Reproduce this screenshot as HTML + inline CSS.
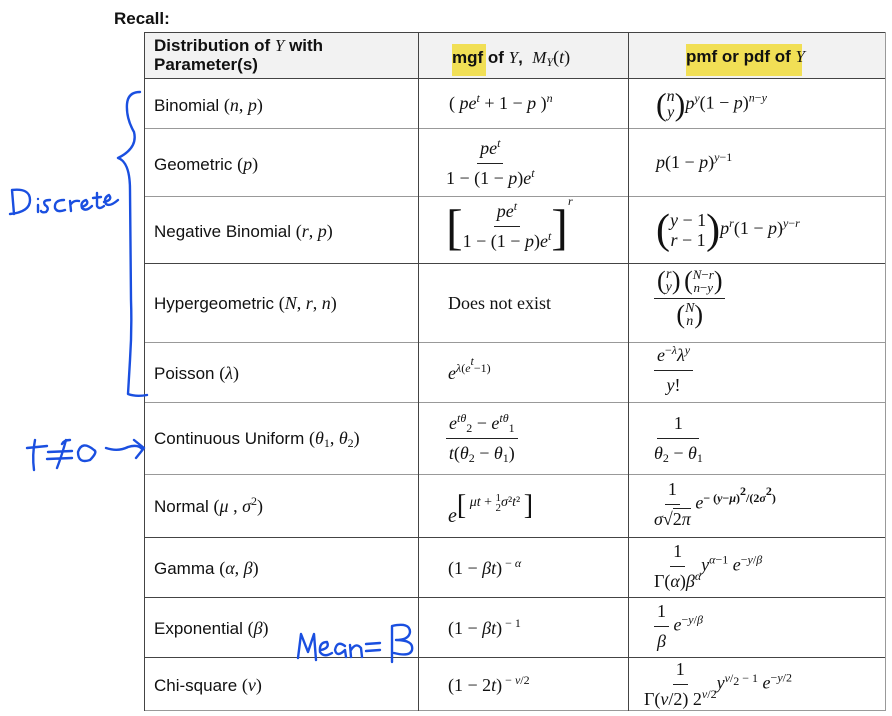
<!DOCTYPE html>
<html><head><meta charset="utf-8"><style>
body{margin:0;width:892px;height:716px;background:#fff;position:relative;overflow:hidden;font-family:"Liberation Sans",sans-serif;color:#111}
.a{position:absolute;white-space:nowrap}
.l{font-size:17px}
.m{font-family:"Liberation Serif","DejaVu Serif",serif;font-size:18px}
i{font-family:"Liberation Serif",serif;font-style:italic}
sup{font-size:12px;vertical-align:7px;line-height:0}
sub{font-size:12px;vertical-align:-3px;line-height:0}
.hl{position:absolute;background:#f1df55}
.hr{position:absolute;left:144px;width:742px;height:0;border-top:1.5px solid #444}
.vr{position:absolute;top:32px;height:679px;width:0;border-left:1.5px solid #444}
.fr{display:inline-flex;flex-direction:column;align-items:center;vertical-align:middle}
.fr>span:first-child{border-bottom:1.3px solid #222;padding:0 3px 4px}
.fr>span:last-child{padding-top:4px}
</style></head><body>
<div class="a" style="left:114px;top:9px;font-size:17px;font-weight:bold">Recall:</div>
<div style="position:absolute;left:144px;top:32px;width:742px;height:46px;background:#f2f2f2"></div>
<div class="hl" style="left:452px;top:44px;width:34px;height:32px"></div>
<div class="hl" style="left:686px;top:44px;width:116px;height:32px"></div>
<div class="hr" style="top:32px"></div>
<div class="hr" style="top:78px"></div>
<div class="hr" style="top:128px;border-color:#999"></div>
<div class="hr" style="top:196px;border-color:#999"></div>
<div class="hr" style="top:263px"></div>
<div class="hr" style="top:342px;border-color:#999"></div>
<div class="hr" style="top:402px;border-color:#999"></div>
<div class="hr" style="top:474px;border-color:#999"></div>
<div class="hr" style="top:537px"></div>
<div class="hr" style="top:597px"></div>
<div class="hr" style="top:657px"></div>
<div class="hr" style="top:710px;border-color:#999"></div>
<div class="vr" style="left:144px"></div>
<div class="vr" style="left:418px"></div>
<div class="vr" style="left:628px"></div>
<div class="vr" style="left:885px;border-color:#999"></div>

<div class="a l" style="left:154px;top:36px;font-weight:bold;line-height:19px">Distribution of <i style="font-weight:normal">Y</i> with<br>Parameter(s)</div>
<div class="a l" style="left:452px;top:47px;font-weight:bold">mgf of <i style="font-weight:normal">Y</i>,&nbsp; <i style="font-weight:normal">M<sub>Y</sub></i><span class="m" style="font-weight:normal">(<i>t</i>)</span></div>
<div class="a l" style="left:686px;top:47px;font-weight:bold">pmf or pdf of <i style="font-weight:normal">Y</i></div>

<div class="a l" style="left:154px;top:95px">Binomial <span class="m">(<i>n</i>, <i>p</i>)</span></div>
<div class="a l" style="left:154px;top:154px">Geometric <span class="m">(<i>p</i>)</span></div>
<div class="a l" style="left:154px;top:221px">Negative Binomial <span class="m">(<i>r</i>, <i>p</i>)</span></div>
<div class="a l" style="left:154px;top:293px">Hypergeometric <span class="m">(<i>N</i>, <i>r</i>, <i>n</i>)</span></div>
<div class="a l" style="left:154px;top:363px">Poisson <span class="m">(<i>λ</i>)</span></div>
<div class="a l" style="left:154px;top:428px">Continuous Uniform <span class="m">(<i>θ</i><sub>1</sub>, <i>θ</i><sub>2</sub>)</span></div>
<div class="a l" style="left:154px;top:496px">Normal <span class="m">(<i>μ</i> , <i>σ</i><sup>2</sup>)</span></div>
<div class="a l" style="left:154px;top:558px">Gamma <span class="m">(<i>α</i>, <i>β</i>)</span></div>
<div class="a l" style="left:154px;top:618px">Exponential <span class="m">(<i>β</i>)</span></div>
<div class="a l" style="left:154px;top:675px">Chi-square <span class="m">(<i>v</i>)</span></div>

<!-- mgf -->
<div class="a m" style="left:449px;top:93px">( <i>pe<sup>t</sup></i> + 1 − <i>p</i> )<sup><i>n</i></sup></div>
<div class="a m" style="left:446px;top:138px"><span class="fr"><span><i>pe<sup>t</sup></i></span><span>1 − (1 − <i>p</i>)<i>e<sup>t</sup></i></span></span></div>
<div class="a m" style="left:446px;top:201px"><span style="font-size:50px;vertical-align:middle;line-height:50px">[</span><span class="fr"><span><i>pe<sup>t</sup></i></span><span>1 − (1 − <i>p</i>)<i>e<sup>t</sup></i></span></span><span style="font-size:50px;vertical-align:middle;line-height:50px">]</span><sup style="vertical-align:26px"><i>r</i></sup></div>
<div class="a m" style="left:448px;top:293px">Does not exist</div>
<div class="a m" style="left:448px;top:361px"><i>e</i><sup><i>λ</i>(<i>e<sup>t</sup></i>−1)</sup></div>
<div class="a m" style="left:446px;top:413px"><span class="fr"><span><i>e<sup>tθ</sup></i><sub>2</sub> − <i>e<sup>tθ</sup></i><sub>1</sub></span><span><i>t</i>(<i>θ</i><sub>2</sub> − <i>θ</i><sub>1</sub>)</span></span></div>
<div class="a m" style="left:448px;top:490px"><i style="font-size:20px;vertical-align:-6px">e</i><span style="font-size:28px;vertical-align:2px;font-weight:100">[</span><span style="font-size:14px;vertical-align:10px"> <i>μt</i> + <span style="display:inline-block;vertical-align:middle;line-height:10px;font-size:11px;text-align:center">1<br>2</span><i>σ</i>²<i>t</i>² </span><span style="font-size:28px;vertical-align:2px">]</span></div>
<div class="a m" style="left:448px;top:558px">(1 − <i>βt</i>)<sup> − <i>α</i></sup></div>
<div class="a m" style="left:448px;top:618px">(1 − <i>βt</i>)<sup> − 1</sup></div>
<div class="a m" style="left:448px;top:675px">(1 − 2<i>t</i>)<sup> − <i>v</i>/2</sup></div>

<!-- pdf -->
<div class="a m" style="left:656px;top:86px"><span style="font-size:32px;vertical-align:middle">(</span><span style="display:inline-block;vertical-align:middle;line-height:16px;font-size:16px;text-align:center"><i>n</i><br><i>y</i></span><span style="font-size:32px;vertical-align:middle">)</span><i>p<sup>y</sup></i>(1 − <i>p</i>)<sup><i>n</i>−<i>y</i></sup></div>
<div class="a m" style="left:656px;top:152px"><i>p</i>(1 − <i>p</i>)<sup><i>y</i>−1</sup></div>
<div class="a m" style="left:656px;top:206px"><span style="font-size:42px;vertical-align:middle">(</span><span style="display:inline-block;vertical-align:middle;line-height:20px;text-align:center"><i>y</i> − 1<br><i>r</i> − 1</span><span style="font-size:42px;vertical-align:middle">)</span><i>p<sup>r</sup></i>(1 − <i>p</i>)<sup><i>y</i>−<i>r</i></sup></div>
<div class="a m" style="left:654px;top:266px;font-size:14px"><span class="fr"><span style="padding-bottom:2px"><span style="font-size:26px;vertical-align:middle">(</span><span style="display:inline-block;vertical-align:middle;line-height:13px;text-align:center"><i>r</i><br><i>y</i></span><span style="font-size:26px;vertical-align:middle">)</span> <span style="font-size:26px;vertical-align:middle">(</span><span style="display:inline-block;vertical-align:middle;line-height:13px;text-align:center;font-size:13px"><i>N</i>−<i>r</i><br><i>n</i>−<i>y</i></span><span style="font-size:26px;vertical-align:middle">)</span></span><span style="padding-top:1px"><span style="font-size:26px;vertical-align:middle">(</span><span style="display:inline-block;vertical-align:middle;line-height:13px;text-align:center"><i>N</i><br><i>n</i></span><span style="font-size:26px;vertical-align:middle">)</span></span></span></div>
<div class="a m" style="left:654px;top:345px"><span class="fr"><span><i>e</i><sup>−<i>λ</i></sup><i>λ<sup>y</sup></i></span><span><i>y</i>!</span></span></div>
<div class="a m" style="left:654px;top:413px"><span class="fr"><span>&nbsp;&nbsp;&nbsp;1&nbsp;&nbsp;&nbsp;</span><span><i>θ</i><sub>2</sub> − <i>θ</i><sub>1</sub></span></span></div>
<div class="a m" style="left:654px;top:479px"><span class="fr"><span>1</span><span><i>σ</i>√<span style="border-top:1px solid #222">2<i>π</i></span></span></span> <i>e</i><sup style="font-weight:bold">− (<i>y</i>−<i>μ</i>)<sup>2</sup>/(2<i>σ</i><sup>2</sup>)</sup></div>
<div class="a m" style="left:654px;top:541px"><span class="fr"><span>1</span><span>Γ(<i>α</i>)<i>β<sup>α</sup></i></span></span><i>y</i><sup><i>α</i>−1</sup> <i>e</i><sup>−<i>y</i>/<i>β</i></sup></div>
<div class="a m" style="left:654px;top:601px"><span class="fr"><span>1</span><span><i>β</i></span></span> <i>e</i><sup>−<i>y</i>/<i>β</i></sup></div>
<div class="a m" style="left:644px;top:659px"><span class="fr"><span>1</span><span>Γ(<i>v</i>/2) 2<sup><i>v</i>/2</sup></span></span><i>y</i><sup><i>v</i>/<sub>2</sub> − 1</sup> <i>e</i><sup>−<i>y</i>/2</sup></div>

<svg style="position:absolute;left:0;top:0" width="892" height="716" fill="none" stroke="#1a4fe0" stroke-width="2.4" stroke-linecap="round" stroke-linejoin="round">
<path d="M140 92 Q128 92 127 104 Q126 118 134 132 Q138 148 118 158 Q130 162 130 190 L131 300 Q132 330 130 360 L128 394 Q136 397 147 395"/>
<path d="M12 190 L14 214 M12 190 Q30 188 30 200 Q30 212 10 214"/>
<path d="M38 205 L38 212 M38 199 L38 199"/>
<path d="M50 200 Q42 200 45 205 Q50 208 46 212 Q42 213 41 211"/>
<path d="M64 200 Q54 200 55 208 Q57 213 65 210"/>
<path d="M70 201 L71 211 M71 204 Q74 200 79 201"/>
<path d="M82 207 Q90 204 86 200 Q80 202 82 208 Q86 212 92 206"/>
<path d="M97 193 L97 206 Q99 210 104 206 M93 198 L101 197"/>
<path d="M104 202 Q113 200 109 195 Q103 198 106 204 Q110 207 118 200"/>
<path d="M35 440 Q32 455 34 470 M27 448 L47 446"/>
<path d="M48 452 L72 451 M47 459 L72 458 M66 440 Q62 455 57 468 M62 444 Q64 440 70 440"/>
<path d="M94 450 Q82 440 78 452 Q78 464 90 460 Q98 452 94 450"/>
<path d="M106 448 Q118 452 128 447 Q138 444 142 449 M134 440 L144 448 L136 458"/>
<path d="M298 658 L301 634 L308 652 L314 634 L316 660"/>
<path d="M321 650 Q330 648 327 642 Q319 642 320 652 Q324 658 332 653"/>
<path d="M345 646 Q337 640 335 650 Q337 658 345 650 L346 657"/>
<path d="M350 645 L351 657 M351 650 Q356 642 361 648 L362 657"/>
<path d="M366 644 L380 643 M366 651 L380 650"/>
<path d="M392 662 L392 626 Q410 622 410 632 Q409 640 396 640 Q414 640 412 650 Q410 657 394 653"/>
</svg>
</body></html>
